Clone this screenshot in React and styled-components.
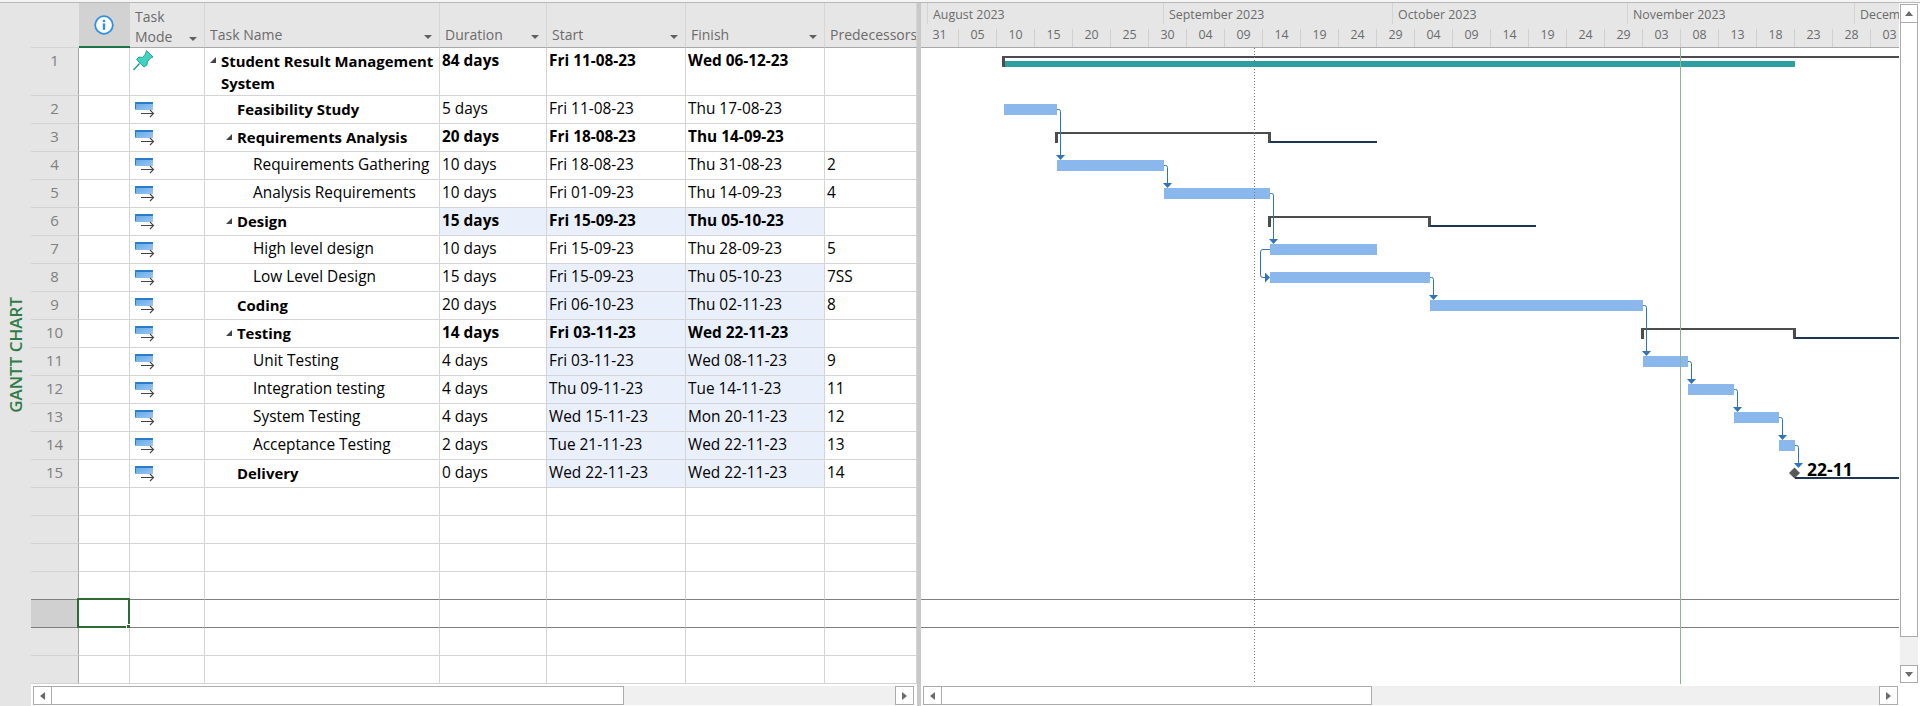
import React from "react";
import styled, { createGlobalStyle } from "styled-components";

const FONT = `"Open Sans", "Noto Sans", "Liberation Sans", sans-serif`;
const COLS = "48px 51px 75px 235px 107px 139px 139px 92px";

const Global = createGlobalStyle`
  html, body { margin: 0; padding: 0; background: #fff; }
  body { font-family: ${FONT}; overflow: hidden; }
  * { box-sizing: border-box; }
`;

const Page = styled.div`
  width: 1920px;
  height: 706px;
  display: flex;
  flex-direction: column;
  overflow: hidden;
  background: #fff;
`;
const TopRule = styled.div`
  height: 3px;
  flex: none;
  background: #f4f4f4;
  border-bottom: 1px solid #b8b8b8;
`;
const Body = styled.div`
  flex: 1;
  display: flex;
  min-height: 0;
`;
const SideStrip = styled.div`
  width: 31px;
  flex: none;
  background: #e5e5e5;
  display: flex;
  align-items: center;
  justify-content: center;
`;
const ViewLabel = styled.div`
  writing-mode: vertical-rl;
  transform: rotate(180deg);
  color: #2f7d46;
  font-size: 17px;
  font-weight: 600;
  white-space: nowrap;
`;
const Workspace = styled.div`
  flex: 1;
  display: flex;
  flex-direction: column;
  min-width: 0;
`;
const Panes = styled.div`
  height: 681px;
  flex: none;
  display: flex;
`;
const Table = styled.div`
  width: 886px;
  flex: none;
  display: flex;
  flex-direction: column;
`;
const Splitter = styled.div`
  width: 4px;
  flex: none;
  background: #c9c9c9;
`;
const HeaderRow = styled.div`
  display: grid;
  grid-template-columns: ${COLS};
  height: 45px;
  flex: none;
`;
const HeadCell = styled.div`
  background: #e6e6e6;
  border-right: 1px solid #d6d6d6;
  border-bottom: 1px solid #a8a8a8;
  color: #6b6b6b;
  font-size: 14px;
  line-height: 20px;
  padding: 0 7px ${(p) => (p.$tall ? 0 : 2)}px 5px;
  display: flex;
  align-items: flex-end;
  justify-content: space-between;
  white-space: nowrap;
  overflow: hidden;
`;
const CornerCell = styled.div`
  background: #e5e5e5;
  border-bottom: 1px solid #d4d4d4;
`;
const IndicatorHead = styled.div`
  background: #d2d2d2;
  border-bottom: 2px solid #217346;
  display: flex;
  align-items: center;
  justify-content: center;
  padding-right: 1px;
`;
const HeadArrow = styled.span`
  width: 0;
  height: 0;
  flex: none;
  border-left: 4px solid transparent;
  border-right: 4px solid transparent;
  border-top: 4px solid #606060;
  margin-bottom: 6px;
`;
const Row = styled.div`
  display: grid;
  grid-template-columns: ${COLS};
  height: ${(p) => p.$h}px;
  flex: none;
`;
const RowNumber = styled.div`
  background: ${(p) => (p.$selected ? "#d0d0d0" : "#e5e5e5")};
  border-right: 1px solid #a6a6a6;
  border-bottom: 1px solid ${(p) => (p.$strong ? "#7f7f7f" : "#d2d2d2")};
  color: #808080;
  font-size: 15px;
  display: flex;
  justify-content: center;
  align-items: ${(p) => (p.$top ? "flex-start" : "center")};
  padding-bottom: ${(p) => (p.$top ? 0 : 3)}px;
  line-height: 24px;
`;
const Cell = styled.div`
  position: relative;
  background: ${(p) => (p.$changed ? "#eaf0fb" : "#fff")};
  border-right: 1px solid #d4d4d4;
  border-bottom: 1px solid ${(p) => (p.$strong ? "#7f7f7f" : "#d4d4d4")};
  color: #000;
  font-size: 15.4px;
  font-weight: ${(p) => (p.$bold ? 700 : 400)};
  line-height: ${(p) => (p.$wrap ? 22 : 26)}px;
  padding: ${(p) => (p.$wrap ? "2px 2px 0 2px" : "0 2px")};
  white-space: nowrap;
  overflow: visible;
`;
const NameCell = styled(Cell)`
  display: flex;
  align-items: flex-start;
  font-size: ${(p) => (p.$bold ? 14.9 : 15.4)}px;
  padding-left: ${(p) => p.$level * 16 + 5}px;
  white-space: ${(p) => (p.$wrap ? "normal" : "nowrap")};
`;
const ToggleSlot = styled.span`
  width: 6px;
  height: 6px;
  flex: none;
  margin: ${(p) => (p.$wrap ? 7 : 10)}px 5px 0 0;
  background: ${(p) => (p.$on ? "#444" : "transparent")};
  clip-path: polygon(100% 0, 100% 100%, 0 100%);
`;
const ModeCell = styled(Cell)`
  padding: ${(p) => (p.$wrap ? "2px 0 0 3px" : "6px 0 0 4px")};
  line-height: 0;
`;
const SelectionBox = styled.div`
  position: absolute;
  left: -2px;
  top: -2px;
  width: 53px;
  height: 30px;
  border: 2px solid #2e6b34;
  pointer-events: none;
`;
const FillHandle = styled.span`
  position: absolute;
  right: -4px;
  bottom: -4px;
  width: 6px;
  height: 6px;
  background: #2e6b34;
  border: 1px solid #fff;
`;

const Chart = styled.div`
  width: 978px;
  flex: none;
  display: flex;
  flex-direction: column;
`;
const Timescale = styled.div`
  height: 45px;
  flex: none;
  background: #e6e6e6;
  border-bottom: 1px solid #a8a8a8;
  overflow: hidden;
`;
const MonthTier = styled.div`
  height: 21px;
  display: flex;
  padding-left: 6px;
`;
const Month = styled.div`
  flex: 0 0 ${(p) => p.$w}px;
  border-left: 1px solid #d4d4d4;
  color: #6b6b6b;
  font-size: 12.4px;
  line-height: 24px;
  padding-left: 5px;
  white-space: nowrap;
  overflow: hidden;
`;
const DayTier = styled.div`
  height: 23px;
  display: flex;
  align-items: flex-end;
`;
const Day = styled.div`
  flex: 0 0 38px;
  height: 18px;
  border-right: 1px solid #d0d0d0;
  color: #6b6b6b;
  font-size: 12.4px;
  line-height: 12px;
  text-align: center;
`;
const ChartSvg = styled.svg`
  display: block;
  width: 978px;
  height: 636px;
`;
const ChartLabel = styled.text`
  font-family: ${FONT};
  font-size: 17.5px;
  font-weight: 700;
  fill: #000;
`;

const VScroll = styled.div`
  width: 21px;
  flex: none;
  padding: 1px 2px 1px 1px;
  display: flex;
  flex-direction: column;
  background: #fff;
`;
const VTrack = styled.div`
  flex: 1;
  background: #f0f0f0;
`;
const VThumb = styled.div`
  height: 614px;
  background: #fff;
  border: 1px solid #ababab;
  border-top: 0;
`;
const ScrollButton = styled.div`
  flex: none;
  width: ${(p) => (p.$v ? 18 : 19)}px;
  height: ${(p) => (p.$v ? (p.$short ? 18 : 19) : 19)}px;
  background: #fff;
  border: 1px solid #ababab;
  display: flex;
  align-items: center;
  justify-content: center;
`;
const Tri = styled.span`
  width: 0;
  height: 0;
  ${(p) =>
    p.$dir === "up" || p.$dir === "down"
      ? `border-left: 4px solid transparent; border-right: 4px solid transparent;
         border-${p.$dir === "up" ? "bottom" : "top"}: 5px solid #6b6b6b;`
      : `border-top: 4px solid transparent; border-bottom: 4px solid transparent;
         border-${p.$dir === "left" ? "right" : "left"}: 5px solid #6b6b6b;`}
`;
const ScrollRow = styled.div`
  flex: 1;
  display: flex;
  padding-top: 2px;
  background: #fff;
`;
const HBar = styled.div`
  flex: none;
  width: ${(p) => p.$w}px;
  padding: 0 ${(p) => p.$pr}px 0 2px;
  display: flex;
  height: 19px;
`;
const HTrack = styled.div`
  flex: 1;
  background: #f0f0f0;
  display: flex;
`;
const HThumb = styled.div`
  width: ${(p) => p.$w}px;
  background: #fff;
  border: 1px solid #ababab;
  border-left: 0;
`;
const SplitterFoot = styled(Splitter)`
  margin-top: -2px;
  height: 24px;
`;

const InfoIcon = () => (
  <svg width="20" height="20" viewBox="0 0 20 20">
    <circle cx="10" cy="10" r="8.8" fill="#fff" stroke="#2f8fe0" strokeWidth="1.8" />
    <circle cx="10" cy="6" r="1.3" fill="#2f8fe0" />
    <rect x="8.8" y="8.4" width="2.4" height="6.4" fill="#2f8fe0" />
  </svg>
);
const PinIcon = () => (
  <svg width="21" height="21" viewBox="0 0 21 21">
    <path
      d="M13.5 .5 L20 7 L17.5 8 L14.5 11.5 L14 15 L11 17 L3.5 9.5 L6 7 L9.5 7.5 L12.5 4 Z"
      fill="#3fd3c2"
      stroke="#1f9c8c"
      strokeWidth="0.9"
    />
    <path d="M.5 20 L6.5 13.5" stroke="#1f9c8c" strokeWidth="1.4" />
  </svg>
);
const AutoIcon = () => (
  <svg width="21" height="16" viewBox="0 0 21 16">
    <defs>
      <linearGradient id="autoBar" x1="0" y1="0" x2="1" y2="1">
        <stop offset="0" stopColor="#5ba6ea" />
        <stop offset="1" stopColor="#9cc6f0" />
      </linearGradient>
    </defs>
    <rect x="1" y="0" width="18" height="8" fill="url(#autoBar)" />
    <rect x="1" y="0" width="18" height="2" fill="#2b7cc8" />
    <rect x="1" y="2" width="1" height="5" fill="#2b7cc8" />
    <path d="M7 11.5 H19.5 M16 8 L19.5 11.5 L16 15" fill="none" stroke="#454545" strokeWidth="1.1" />
  </svg>
);

const TASKS = [
  { n: 1, name: "Student Result Management System", level: 0, sum: 1, bold: 1, dur: "84 days", start: "Fri 11-08-23", finish: "Wed 06-12-23", pin: 1, allBold: 1 },
  { n: 2, name: "Feasibility Study", level: 1, bold: 1, dur: "5 days", start: "Fri 11-08-23", finish: "Thu 17-08-23" },
  { n: 3, name: "Requirements Analysis", level: 1, sum: 1, bold: 1, dur: "20 days", start: "Fri 18-08-23", finish: "Thu 14-09-23", allBold: 1 },
  { n: 4, name: "Requirements Gathering", level: 2, dur: "10 days", start: "Fri 18-08-23", finish: "Thu 31-08-23", pred: "2" },
  { n: 5, name: "Analysis Requirements", level: 2, dur: "10 days", start: "Fri 01-09-23", finish: "Thu 14-09-23", pred: "4" },
  { n: 6, name: "Design", level: 1, sum: 1, bold: 1, dur: "15 days", start: "Fri 15-09-23", finish: "Thu 05-10-23", allBold: 1, durCh: 1, ch: 1 },
  { n: 7, name: "High level design", level: 2, dur: "10 days", start: "Fri 15-09-23", finish: "Thu 28-09-23", pred: "5" },
  { n: 8, name: "Low Level Design", level: 2, dur: "15 days", start: "Fri 15-09-23", finish: "Thu 05-10-23", pred: "7SS", ch: 1 },
  { n: 9, name: "Coding", level: 1, bold: 1, dur: "20 days", start: "Fri 06-10-23", finish: "Thu 02-11-23", pred: "8", ch: 1 },
  { n: 10, name: "Testing", level: 1, sum: 1, bold: 1, dur: "14 days", start: "Fri 03-11-23", finish: "Wed 22-11-23", allBold: 1, ch: 1 },
  { n: 11, name: "Unit Testing", level: 2, dur: "4 days", start: "Fri 03-11-23", finish: "Wed 08-11-23", pred: "9", ch: 1 },
  { n: 12, name: "Integration testing", level: 2, dur: "4 days", start: "Thu 09-11-23", finish: "Tue 14-11-23", pred: "11", ch: 1 },
  { n: 13, name: "System Testing", level: 2, dur: "4 days", start: "Wed 15-11-23", finish: "Mon 20-11-23", pred: "12", ch: 1 },
  { n: 14, name: "Acceptance Testing", level: 2, dur: "2 days", start: "Tue 21-11-23", finish: "Wed 22-11-23", pred: "13", ch: 1 },
  { n: 15, name: "Delivery", level: 1, bold: 1, dur: "0 days", start: "Wed 22-11-23", finish: "Wed 22-11-23", pred: "14", ch: 1 },
];

const MONTHS = [
  { w: 236, t: "August 2023" },
  { w: 229, t: "September 2023" },
  { w: 235, t: "October 2023" },
  { w: 227, t: "November 2023" },
  { w: 60, t: "December 2023" },
];
const DAYS = "31 05 10 15 20 25 30 04 09 14 19 24 29 04 09 14 19 24 29 03 08 13 18 23 28 03".split(" ");

const BARS = [
  [1004, 104, 53],
  [1057, 160, 107],
  [1164, 188, 106],
  [1270, 244, 107],
  [1270, 272, 160],
  [1430, 300, 213],
  [1643, 356, 45],
  [1688, 384, 46],
  [1734, 412, 45],
  [1779, 440, 16],
];
const LINKS = [
  [1057, 109, 1060, 160],
  [1164, 165, 1167, 188],
  [1270, 193, 1273, 244],
  [1430, 277, 1433, 300],
  [1643, 305, 1646, 356],
  [1688, 361, 1691, 384],
  [1734, 389, 1737, 412],
  [1779, 417, 1782, 440],
  [1795, 445, 1798, 468],
];
const SUMMARIES = [
  { x1: 1055, x2: 1271, y: 132, end: 1377 },
  { x1: 1268, x2: 1431, y: 216, end: 1536 },
  { x1: 1641, x2: 1796, y: 328, end: 1899 },
];

const GanttDrawing = () => (
  <ChartSvg viewBox="921 48 978 636" shapeRendering="crispEdges">
    <rect x="921" y="599" width="978" height="1" fill="#7f7f7f" />
    <rect x="921" y="627" width="978" height="1" fill="#7f7f7f" />

    <rect x="1002" y="56" width="897" height="2" fill="#4d4d4d" />
    <rect x="1002" y="56" width="3" height="11" fill="#4d4d4d" />
    <rect x="1005" y="61" width="790" height="6" fill="#2e9fa0" />

    {SUMMARIES.map((s) => (
      <g key={s.y}>
        <rect x={s.x1} y={s.y} width={s.x2 - s.x1} height="2" fill="#4d4d4d" />
        <rect x={s.x1} y={s.y} width="3" height="11" fill="#4d4d4d" />
        <rect x={s.x2 - 3} y={s.y} width="3" height="11" fill="#4d4d4d" />
        <rect x={s.x2 - 1} y={s.y + 9} width={s.end - s.x2 + 1} height="2" fill="#1f3650" />
      </g>
    ))}

    {BARS.map(([x, y, w]) => (
      <rect key={y} x={x} y={y} width={w} height="11" fill="#8ab8ec" />
    ))}

    <g shapeRendering="geometricPrecision">
      {LINKS.map(([x0, y0, x, y]) => (
        <g key={y}>
          <path
            d={`M${x0} ${y0 + 0.5} H${x - 1.5} Q${x + 0.5} ${y0 + 0.5} ${x + 0.5} ${y0 + 2.5} V${y - 4}`}
            fill="none"
            stroke="#2e75c0"
            strokeWidth="1"
          />
          <polygon points={`${x - 4},${y - 5} ${x + 5},${y - 5} ${x + 0.5},${y}`} fill="#2e75c0" />
        </g>
      ))}
      <path
        d="M1270 249.5 H1263 Q1260.5 249.5 1260.5 252 V275 Q1260.5 277.5 1263 277.5 H1266"
        fill="none"
        stroke="#2e75c0"
        strokeWidth="1"
      />
      <polygon points="1265,272.5 1265,282.5 1270,277.5" fill="#2e75c0" />
      <polygon points="1794.5,467.5 1800,473 1794.5,478.5 1789,473" fill="#595959" />
    </g>

    <rect x="1795" y="477" width="104" height="2" fill="#1f3650" />
    <ChartLabel x="1807" y="476" shapeRendering="auto">22-11</ChartLabel>

    <line x1="1254.5" y1="48" x2="1254.5" y2="684" stroke="#6f7f6f" strokeWidth="1" strokeDasharray="1 2" />
    <line x1="1680.5" y1="48" x2="1680.5" y2="684" stroke="#8fb58f" strokeWidth="1" />
  </ChartSvg>
);

const BLANKS = [16, 17, 18, 19, 20, 21, 22];

export default function App() {
  return (
    <Page>
      <Global />
      <TopRule />
      <Body>
        <SideStrip>
          <ViewLabel>GANTT CHART</ViewLabel>
        </SideStrip>
        <Workspace>
          <Panes>
            <Table>
              <HeaderRow>
                <CornerCell />
                <IndicatorHead>
                  <InfoIcon />
                </IndicatorHead>
                <HeadCell $tall>
                  <span>
                    Task
                    <br />
                    Mode
                  </span>
                  <HeadArrow />
                </HeadCell>
                <HeadCell>
                  Task Name
                  <HeadArrow />
                </HeadCell>
                <HeadCell>
                  Duration
                  <HeadArrow />
                </HeadCell>
                <HeadCell>
                  Start
                  <HeadArrow />
                </HeadCell>
                <HeadCell>
                  Finish
                  <HeadArrow />
                </HeadCell>
                <HeadCell>Predecessors</HeadCell>
              </HeaderRow>

              {TASKS.map((t) => {
                const wrap = t.n === 1;
                return (
                  <Row key={t.n} $h={wrap ? 48 : 28}>
                    <RowNumber $top={wrap}>{t.n}</RowNumber>
                    <Cell />
                    <ModeCell $wrap={wrap}>{t.pin ? <PinIcon /> : <AutoIcon />}</ModeCell>
                    <NameCell $level={t.level} $bold={t.bold} $wrap={wrap}>
                      <ToggleSlot $on={t.sum} $wrap={wrap} />
                      <span>{t.name}</span>
                    </NameCell>
                    <Cell $bold={t.allBold} $wrap={wrap} $changed={t.durCh}>{t.dur}</Cell>
                    <Cell $bold={t.allBold} $wrap={wrap} $changed={t.ch}>{t.start}</Cell>
                    <Cell $bold={t.allBold} $wrap={wrap} $changed={t.ch}>{t.finish}</Cell>
                    <Cell $wrap={wrap}>{t.pred}</Cell>
                  </Row>
                );
              })}

              {BLANKS.map((n) => {
                const strong = n === 19 || n === 20;
                const selected = n === 20;
                return (
                  <Row key={n} $h={28}>
                    <RowNumber $strong={strong} $selected={selected} />
                    <Cell $strong={strong}>
                      {selected && (
                        <SelectionBox>
                          <FillHandle />
                        </SelectionBox>
                      )}
                    </Cell>
                    <Cell $strong={strong} />
                    <Cell $strong={strong} />
                    <Cell $strong={strong} />
                    <Cell $strong={strong} />
                    <Cell $strong={strong} />
                    <Cell $strong={strong} />
                  </Row>
                );
              })}
            </Table>
            <Splitter />
            <Chart>
              <Timescale>
                <MonthTier>
                  {MONTHS.map((m) => (
                    <Month key={m.t} $w={m.w}>
                      {m.t}
                    </Month>
                  ))}
                </MonthTier>
                <DayTier>
                  {DAYS.map((d, i) => (
                    <Day key={i}>{d}</Day>
                  ))}
                </DayTier>
              </Timescale>
              <GanttDrawing />
            </Chart>
            <VScroll>
              <ScrollButton $v>
                <Tri $dir="up" />
              </ScrollButton>
              <VTrack>
                <VThumb />
              </VTrack>
              <ScrollButton $v $short>
                <Tri $dir="down" />
              </ScrollButton>
            </VScroll>
          </Panes>
          <ScrollRow>
            <HBar $w={886} $pr={3}>
              <ScrollButton>
                <Tri $dir="left" />
              </ScrollButton>
              <HTrack>
                <HThumb $w={572} />
              </HTrack>
              <ScrollButton>
                <Tri $dir="right" />
              </ScrollButton>
            </HBar>
            <SplitterFoot />
            <HBar $w={999} $pr={22}>
              <ScrollButton>
                <Tri $dir="left" />
              </ScrollButton>
              <HTrack>
                <HThumb $w={430} />
              </HTrack>
              <ScrollButton>
                <Tri $dir="right" />
              </ScrollButton>
            </HBar>
          </ScrollRow>
        </Workspace>
      </Body>
    </Page>
  );
}
